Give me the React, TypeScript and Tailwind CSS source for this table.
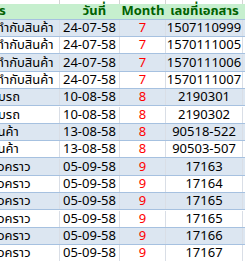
const rows = [
  { item: "ทำกับสินค้า", shift: "-ml-[4px]", date: "24-07-58", month: 7, doc: "1507110999" },
  { item: "ทำกับสินค้า", shift: "-ml-[4px]", date: "24-07-58", month: 7, doc: "1570111005" },
  { item: "ทำกับสินค้า", shift: "-ml-[4px]", date: "24-07-58", month: 7, doc: "1570111006" },
  { item: "ทำกับสินค้า", shift: "-ml-[4px]", date: "24-07-58", month: 7, doc: "1570111007" },
  { item: "ับรถ", shift: "-ml-[2px]", date: "10-08-58", month: 8, doc: "2190301" },
  { item: "ับรถ", shift: "-ml-[2px]", date: "10-08-58", month: 8, doc: "2190302" },
  { item: "สินค้า", shift: "-ml-[10px]", date: "13-08-58", month: 8, doc: "90518-522" },
  { item: "สินค้า", shift: "-ml-[10px]", date: "13-08-58", month: 8, doc: "90503-507" },
  { item: "ชั่วคราว", shift: "-ml-[9px]", date: "05-09-58", month: 9, doc: "17163" },
  { item: "ชั่วคราว", shift: "-ml-[9px]", date: "05-09-58", month: 9, doc: "17164" },
  { item: "ชั่วคราว", shift: "-ml-[9px]", date: "05-09-58", month: 9, doc: "17165" },
  { item: "ชั่วคราว", shift: "-ml-[9px]", date: "05-09-58", month: 9, doc: "17165" },
  { item: "ชั่วคราว", shift: "-ml-[9px]", date: "05-09-58", month: 9, doc: "17166" },
  { item: "ชั่วคราว", shift: "-ml-[9px]", date: "05-09-58", month: 9, doc: "17167" },
];

const heights = ["h-[17px]", "h-[17px]", "h-[18px]"];

export default function App() {
  return (
    <div
      className="h-[262px] w-[245px] overflow-hidden bg-white text-[13px] leading-4 text-black"
      style={{ fontFamily: '"Noto Sans Thai", Tahoma, "Liberation Sans", "DejaVu Sans", sans-serif' }}
    >
      {/* cut-off row above the header */}
      <div className="grid h-[4px] grid-cols-[60px_60px_46px_77px_1fr]">
        <div className="border-r border-[#d4d4d4]" />
        <div className="border-r border-[#d4d4d4]" />
        <div className="border-r border-[#d4d4d4]" />
        <div className="border-r border-[#d4d4d4]" />
        <div />
      </div>

      {/* Header */}
      <div className="grid h-[15px] grid-cols-[60px_60px_46px_77px_1fr] items-center bg-[#c6efce] font-bold leading-[15px] text-[#006100]">
        <div className="overflow-hidden whitespace-nowrap">
          <span className="-ml-[1px]">ร</span>
        </div>
        <div className="whitespace-nowrap pr-[14px] text-right">วันที่</div>
        <div className="text-center">Month</div>
        <div className="whitespace-nowrap text-center">เลขที่เอกสาร</div>
        <div />
      </div>

      {/* Rows */}
      {rows.map((row, i) => (
        <div
          key={i}
          className={`grid grid-cols-[60px_60px_46px_77px_1fr] items-center border-t border-[#a6c1e0] ${heights[i % 3]} ${
            i % 2 === 0 ? "bg-[#dce6f1]" : "bg-white"
          }`}
        >
          <div className="overflow-hidden whitespace-nowrap border-r border-[#d9dee6]">
            <span className={row.shift}>{row.item}</span>
          </div>
          <div className="border-r border-[#d9dee6] text-center">{row.date}</div>
          <div className="border-r border-[#d9dee6] text-center text-[#ff0000]">{row.month}</div>
          <div className="border-r border-[#d9dee6] text-center">{row.doc}</div>
          <div />
        </div>
      ))}
    </div>
  );
}
